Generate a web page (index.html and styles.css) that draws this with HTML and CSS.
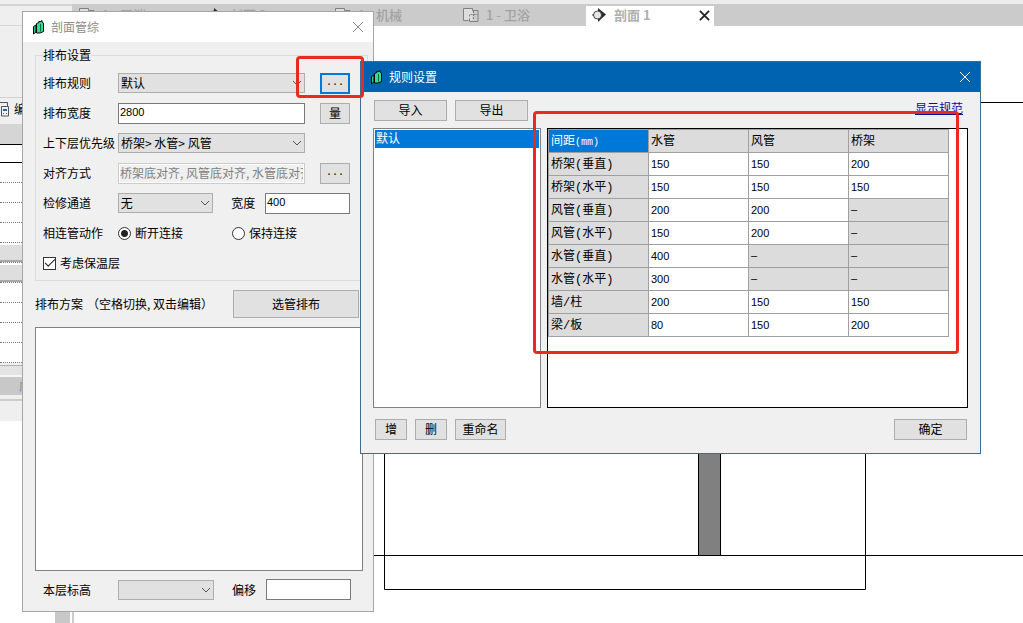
FILE: index.html
```html
<!DOCTYPE html>
<html lang="zh-CN">
<head>
<meta charset="utf-8">
<title>剖面管综</title>
<link rel="stylesheet" href="styles.css">
</head>
<body>
<svg class="defs" aria-hidden="true">
  <symbol id="app-icon" viewBox="0 0 13 15">
    <path d="M1.500 6.500L4 5v7l-2.500 2z" fill="#2cc684" stroke="#050505"/>
    <path d="M4.500 3.500L7 2.500V1l1 1 2-1.500V2l1.500 1v8.500L8 13H4.500z" fill="#35dc96" stroke="#050505"/>
    <path d="M8.500 4v7.500" fill="none" stroke="#0b6b43"/>
  </symbol>
  <symbol id="plan-icon" viewBox="0 0 16 14">
    <path d="M.5.5h9v12h-9z" fill="#dedede"/>
    <path d="M5.500 12.500h-5V.5h9v2h5.500v11H6.500v-3" fill="none" stroke="#808080"/>
    <path d="M6.500 8.500v-2h8M10.500 3v8" fill="none" stroke="#808080" stroke-dasharray="2 1"/>
  </symbol>
  <symbol id="section-icon" viewBox="0 0 14 14">
    <path d="M6 0l8 6.500L6 14z" fill="#2b2b2b"/>
    <circle cx="5.500" cy="7" r="4" fill="#e8e8e8" stroke="#444"/>
    <path d="M0 7h2" stroke="#444"/>
  </symbol>
  <symbol id="chevron" viewBox="0 0 10 6">
    <path d="M1 1l4 4 4-4" fill="none" stroke="#555"/>
  </symbol>
  <symbol id="cross" viewBox="0 0 12 12">
    <path d="M1 1l10 10M11 1L1 11" fill="none" stroke="currentColor"/>
  </symbol>
</svg>

<div class="desktop">
  <nav class="tabs">
    <button class="tab"><svg class="tab-icon"><use href="#plan-icon"/></svg>1 - 平消</button>
    <button class="tab"><svg class="tab-icon"><use href="#section-icon"/></svg>剖面 2</button>
    <button class="tab"><svg class="tab-icon"><use href="#plan-icon"/></svg>1 - 机械</button>
    <button class="tab"><svg class="tab-icon"><use href="#plan-icon"/></svg>1 - 卫浴</button>
    <button class="tab active"><svg class="tab-icon"><use href="#section-icon"/></svg>剖面 1<svg class="tab-close"><use href="#cross"/></svg></button>
  </nav>

  <aside class="props">
    <div class="props-head"></div>
    <div class="props-type">
      <svg class="edit-icon" viewBox="0 0 10 16"><path d="M0 1.500h7.500V5M1.500 15V5.500h7V15z" fill="none" stroke="#555"/><path d="M3 8h4v2H3z" fill="#246a9e"/><path d="M3 12.500h1M6 12.500h1" stroke="#246a9e"/></svg>
      <span>编</span>
    </div>
    <div class="props-bar"></div>
    <div class="props-gap"></div>
    <div class="prop"></div><div class="prop"></div><div class="prop"></div><div class="prop"></div>
    <div class="prop group"></div>
    <div class="prop group"></div>
    <div class="prop"></div><div class="prop"></div><div class="prop"></div><div class="prop"></div>
    <div class="props-sep"></div>
    <div class="props-apply">应</div>
    <div class="props-foot"></div>
  </aside>

  <svg class="drawing" aria-hidden="true">
    <path d="M900 102.500h2000M300 555.500h2600M384.500 400v189.500h481V400" fill="none" stroke="#000"/>
    <path d="M698.500 400v155.500h22V400" fill="#808080" stroke="#000"/>
    <path d="M55 600h15v100H55z" fill="#c8c8c8"/>
    <path d="M73 600v100" stroke="#ccc" stroke-width="2"/>
  </svg>

  <section class="window main">
    <header class="titlebar">
      <svg class="app-icon"><use href="#app-icon"/></svg>
      <h1>剖面管综</h1>
      <button class="close" aria-label="关闭"><svg><use href="#cross"/></svg></button>
    </header>
    <form class="main-body">
      <fieldset>
        <legend>排布设置</legend>
        <div class="row">
          <label class="name" for="rule">排布规则</label>
          <span class="select wide"><select id="rule"><option>默认</option></select><svg><use href="#chevron"/></svg></span>
          <button type="button" class="small dots focus">...</button>
        </div>
        <div class="row">
          <label class="name" for="width">排布宽度</label>
          <input class="text wide" id="width" value="2800">
          <button type="button" class="small">量</button>
        </div>
        <div class="row">
          <label class="name" for="prio">上下层优先级</label>
          <span class="select wide"><select id="prio"><option>桥架&gt; 水管&gt; 风管</option></select><svg><use href="#chevron"/></svg></span>
        </div>
        <div class="row">
          <label class="name" for="align">对齐方式</label>
          <input class="text wide cjk" id="align" value="桥架底对齐, 风管底对齐, 水管底对齐" disabled>
          <button type="button" class="small dots">...</button>
        </div>
        <div class="row">
          <label class="name" for="lane">检修通道</label>
          <span class="select half"><select id="lane"><option>无</option></select><svg><use href="#chevron"/></svg></span>
          <label class="second" for="lane-width">宽度</label>
          <input class="text short" id="lane-width" value="400">
        </div>
        <div class="row">
          <span class="name">相连管动作</span>
          <label class="choice half"><input type="radio" name="link" checked>断开连接</label>
          <label class="choice"><input type="radio" name="link">保持连接</label>
        </div>
        <div class="row">
          <label class="choice"><input type="checkbox" checked>考虑保温层</label>
        </div>
      </fieldset>
      <div class="scheme">
        <label for="schemes">排布方案<span class="hint">（空格切换, 双击编辑）</span></label>
        <button type="button" class="arrange">选管排布</button>
      </div>
      <textarea id="schemes"></textarea>
      <div class="row level">
        <label class="name" for="level">本层标高</label>
        <span class="select half"><select id="level"><option></option></select><svg><use href="#chevron"/></svg></span>
        <label class="second" for="offset">偏移</label>
        <input class="text short" id="offset">
      </div>
    </form>
  </section>

  <section class="window dialog">
    <header class="titlebar">
      <svg class="app-icon"><use href="#app-icon"/></svg>
      <h2>规则设置</h2>
      <button class="close" aria-label="关闭"><svg><use href="#cross"/></svg></button>
    </header>
    <div class="dialog-body">
      <div class="tools">
        <button class="medium">导入</button>
        <button class="medium">导出</button>
        <a href="#spec">显示规范</a>
      </div>
      <div class="panes">
        <ul class="rules"><li>默认</li></ul>
        <div class="grid">
          <table>
            <thead><tr><th class="corner">间距<span class="unit">(mm)</span></th><th>水管</th><th>风管</th><th>桥架</th></tr></thead>
            <tbody>
              <tr><th>桥架(垂直)</th><td>150</td><td>150</td><td>200</td></tr>
              <tr><th>桥架(水平)</th><td>150</td><td>150</td><td>150</td></tr>
              <tr><th>风管(垂直)</th><td>200</td><td>200</td><td class="na">–</td></tr>
              <tr><th>风管(水平)</th><td>150</td><td>200</td><td class="na">–</td></tr>
              <tr><th>水管(垂直)</th><td>400</td><td class="na">–</td><td class="na">–</td></tr>
              <tr><th>水管(水平)</th><td>300</td><td class="na">–</td><td class="na">–</td></tr>
              <tr><th>墙/柱</th><td>200</td><td>150</td><td>150</td></tr>
              <tr><th>梁/板</th><td>80</td><td>150</td><td>200</td></tr>
            </tbody>
          </table>
        </div>
      </div>
      <div class="actions">
        <button class="tiny">增</button>
        <button class="tiny">删</button>
        <button class="rename">重命名</button>
        <button class="medium ok">确定</button>
      </div>
    </div>
  </section>

  <div class="mark mark-button"></div>
  <div class="mark mark-table"></div>
</div>
</body>
</html>
```

FILE: styles.css
```css
* { box-sizing: border-box; }

body {
  margin: 0;
  font: 12px/16px "Noto Sans CJK SC", sans-serif;
  color: #000;
  background: #fff;
}

button, input, select, textarea { font: inherit; color: inherit; margin: 0; padding: 0; }

h1, h2 { margin: 0; font-size: 12px; font-weight: 400; }

.defs { position: absolute; width: 0; height: 0; }

.desktop { position: relative; height: 100vh; overflow: hidden; }

/* view tabs */
.tabs {
  display: flex;
  height: 26px;
  padding: 6px 0 0 74px;
  background: linear-gradient(#ececec 4px, #cbcbcb 4px);
}
.tab {
  display: flex;
  align-items: center;
  width: 128px;
  padding: 0 4px 2px 5px;
  border: 0;
  background: none;
  color: #a2a2a2;
  font-size: 13px;
  font-weight: 500;
  white-space: pre;
}
.tab.active { background: #fff; color: #b0b0b0; font-weight: 700; }
.tab-icon { width: 16px; height: 14px; margin-right: 7px; }
.tab-close { width: 11px; height: 11px; margin-left: auto; color: #222; stroke-width: 2; }

/* property palette */
.props {
  position: absolute;
  top: 0;
  left: 0;
  width: 72px;
  background: #efefef;
}
.props-head { height: 98px; border-bottom: 1px solid #d0d0d0; background: linear-gradient(#efefef 4px, #d4d4d4 4px 6px, #efefef 6px 25px, #d8d8d8 25px 26px, #efefef 26px); }
.props-type { display: flex; align-items: center; gap: 4px; height: 26px; padding-bottom: 4px; }
.edit-icon { width: 10px; height: 16px; }
.props-bar { height: 21px; background: #d5d5d5; border-bottom: 1px solid #000; }
.props-gap { height: 18px; background: #fff; border-bottom: 1px solid #000; }
.prop { height: 20px; background: #fff; border-bottom: 1px dotted #777; }
.prop.group { background: linear-gradient(#fff 2px, #dedede 2px 17px, #a8a8a8 17px); }
.props-sep { height: 13px; margin-top: 2px; border-top: 1px solid #b0b0b0; background: linear-gradient(#e4e4e4 9px, #f6f6f6 9px 11px, #c8c8c8 11px); }
.props-apply { height: 17px; padding-left: 19px; background: #c8c8c8; color: #888; }
.props-foot { height: 26px; background: linear-gradient(#efefef 4px, #ccc 4px 6px, #efefef 6px); }

.drawing { position: absolute; inset: 0; width: 100%; height: 100%; }

/* windows */
.window { position: absolute; background: #f0f0f0; }
.window.main {
  display: flex;
  flex-direction: column;
  top: 11px;
  bottom: 11px;
  left: 22px;
  width: 352px;
  border: 1px solid #a6a6a6;
}
.window.dialog { top: 61px; left: 360px; right: 42px; border: 1px solid #3a6d94; }

.titlebar { display: flex; align-items: center; height: 30px; padding: 0 9px; background: #fff; color: #8c8c8c; }
.dialog .titlebar { background: #0063b1; color: #fff; }
.app-icon { width: 13px; height: 15px; margin-right: 6px; }
.close { display: flex; margin-left: auto; border: 0; background: none; }
.close svg { width: 12px; height: 12px; }

/* controls */
.main-body button, .dialog-body button {
  height: 21px;
  border: 1px solid #adadad;
  background: #e1e1e1;
  line-height: 16px;
}
.dialog-body button { padding-bottom: 2px; }
.select { position: relative; display: flex; height: 20px; }
.select select {
  appearance: none;
  width: 100%;
  padding: 0 2px;
  border: 1px solid #adadad;
  border-radius: 0;
  background: #e1e1e1;
}
.select svg { position: absolute; right: 3px; top: 7px; width: 10px; height: 6px; pointer-events: none; }
.text {
  height: 21px;
  padding: 0 1px 2px;
  border: 1px solid #7a7a7a;
  background: #fff;
  font-family: "Liberation Sans", sans-serif;
  font-size: 11px;
}
.text.cjk { font-family: "Noto Sans CJK SC", sans-serif; font-size: 12px; }
.text:disabled { border: 1px solid #ccc; background: #f0f0f0; color: #808080; box-shadow: inset 0 0 0 1px #fff; }
.wide { flex: 1; min-width: 0; }
.half { width: 96px; }
.short { width: 85px; }

.main-body { flex: 1; display: flex; flex-direction: column; padding: 4px 10px 7px 12px; }
fieldset {
  min-width: 0;
  margin: 0 -5px 0 0;
  padding: 4px 17px 2px 7px;
  border: 1px solid #dcdcdc;
}
legend { padding: 0; line-height: 18px; }
.row { display: flex; align-items: center; height: 30px; }
.name { width: 75px; white-space: nowrap; }
.second { width: 34px; margin-left: 18px; }
.main-body .small { width: 30px; margin-left: 15px; }
.main-body .dots { font-family: "Liberation Mono", monospace; font-size: 10px; }
.main-body .focus { border: 2px solid #0078d7; line-height: 14px; }
.row .select.wide:last-child { margin-right: 45px; }
.choice { display: flex; align-items: center; gap: 4px; white-space: nowrap; }
.choice.half { margin-right: 18px; }
.choice input {
  appearance: none;
  width: 13px;
  height: 13px;
  border: 1px solid #333;
  background: #fff;
}
.choice input[type="radio"] { border-radius: 50%; }
.choice input[type="radio"]:checked { background: radial-gradient(#222 3px, #fff 4px); }
.choice input[type="checkbox"] { display: grid; place-items: center; }
.choice input[type="checkbox"]:checked::before {
  content: "";
  width: 9px;
  height: 4px;
  margin-bottom: 3px;
  border: solid #222;
  border-width: 0 0 1px 1px;
  transform: rotate(-45deg);
}

.scheme { display: flex; align-items: center; justify-content: space-between; height: 46px; margin-right: 4px; }
.hint { margin-left: 4px; }
.main-body .arrange { width: 126px; height: 28px; }
textarea { flex: 1; resize: none; border: 1px solid #828282; background: #fff; }
.level { height: 37px; margin: 0 0 -4px; padding-left: 8px; }

/* rule dialog */
.dialog-body { padding: 8px 12px 13px; }
.tools, .actions { display: flex; gap: 8px; padding-left: 1px; }
.actions { padding: 0 1px 0 2px; }
.tools a { margin: 0 5px 0 auto; color: #0b0b9c; }
.medium { width: 73px; }
.tiny { width: 32px; }
.rename { width: 51px; }
.ok { margin-left: auto; }
.panes { display: flex; gap: 6px; height: 280px; margin: 7px 0 11px; }
.rules { width: 168px; margin: 0; padding: 1px; list-style: none; border: 1px solid #828282; background: #fff; }
.rules li { height: 18px; padding-left: 1px; background: #0078d7; color: #fff; }
.grid { flex: 1; padding-right: 18px; border: 1px solid #000; background: #fff; }
table { width: 100%; table-layout: fixed; border-collapse: collapse; }
th, td { height: 23px; padding: 0 2px; border: 1px solid #a0a0a0; text-align: left; font-weight: 400; }
th { padding-top: 2px; background: #dcdcdc; font-family: "Liberation Mono", "Noto Sans CJK SC", monospace; }
td { font-family: "Liberation Sans", sans-serif; font-size: 11px; }
.corner { background: #0078d7; color: #fff; }
.unit { font-size: 10px; }
.na { padding-bottom: 3px; background: #dcdcdc; }

/* highlight frames */
.mark { position: absolute; border: 3px solid #ea2a20; border-radius: 4px; pointer-events: none; }
.mark-button { left: 296px; top: 56px; width: 68px; height: 42px; }
.mark-table { left: 533px; top: 111px; right: 64px; height: 243px; }
```
